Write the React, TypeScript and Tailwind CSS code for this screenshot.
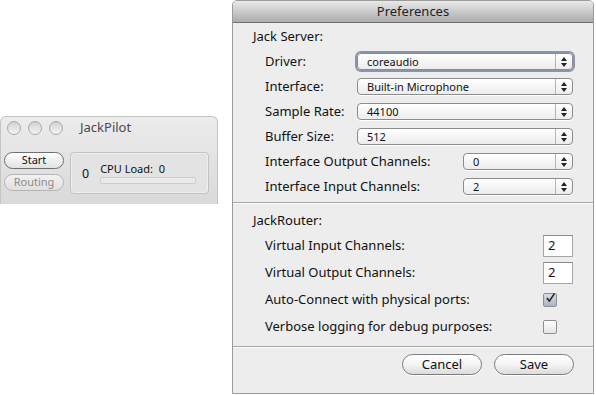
import React from "react";

const font = { fontFamily: '"Noto Sans", "DejaVu Sans", sans-serif' };

function Popup({ value, focused, width }: { value: string; focused?: boolean; width: string }) {
  return (
    <div
      className={`${width} h-[17px] rounded-[4px] border border-[#8c8c8c] bg-gradient-to-b from-[#ffffff] to-[#ececec] flex items-stretch ${
        focused ? "shadow-[0_0_0_2px_#8796aa]" : "shadow-[0_1px_0_#ffffff]"
      }`}
    >
      <div className="flex-1 flex items-center pl-[9px] text-[11px] text-[#111] leading-none">{value}</div>
      <div className="w-[17px] border-l border-[#b5b5b5] flex flex-col items-center justify-center gap-[2px]">
        <svg width="6" height="4" viewBox="0 0 6 4"><path d="M3 0 L6 4 L0 4 Z" fill="#222" /></svg>
        <svg width="6" height="4" viewBox="0 0 6 4"><path d="M0 0 L6 0 L3 4 Z" fill="#222" /></svg>
      </div>
    </div>
  );
}

function Row({ label, children, h = "h-[25px]" }: { label: string; children: React.ReactNode; h?: string }) {
  return (
    <div className={`${h} flex items-center justify-between pl-[32px] pr-[20px]`}>
      <span className="text-[13px] text-[#111]">{label}</span>
      {children}
    </div>
  );
}

function Checkbox({ checked }: { checked?: boolean }) {
  return (
    <div
      className={`w-[14px] h-[14px] rounded-[2px] border border-[#8f8f8f] mr-[16px] flex items-center justify-center ${
        checked ? "bg-gradient-to-b from-[#d8dde6] to-[#aab3c2]" : "bg-gradient-to-b from-[#ffffff] to-[#e4e4e4]"
      }`}
    >
      {checked && (
        <svg width="14" height="14" viewBox="0 0 14 14" className="-mt-[3px] ml-[1px]">
          <path d="M2.5 7 L5.5 11 L12 1.5" stroke="#222" strokeWidth="2" fill="none" strokeLinejoin="round" />
        </svg>
      )}
    </div>
  );
}

function NumField({ v }: { v: string }) {
  return (
    <div className="w-[30px] h-[22px] bg-white border border-[#a6a6a6] border-t-[#8a8a8a] flex items-center pl-[4px] text-[13px] text-[#111]">
      {v}
    </div>
  );
}

function PillButton({ label }: { label: string }) {
  return (
    <div className="w-[80px] h-[21px] rounded-full border border-[#7c7c7c] bg-gradient-to-b from-[#ffffff] via-[#f4f4f4] to-[#dcdcdc] flex items-center justify-center text-[13px] text-[#111] shadow-[0_1px_0_#ffffff]">
      {label}
    </div>
  );
}

function Light() {
  return (
    <div className="w-[14px] h-[14px] rounded-full border border-[#a9a9a9] bg-gradient-to-b from-[#cfcfcf] via-[#e4e4e4] to-[#f3f3f3]" />
  );
}

export default function App() {
  return (
    <div className="w-[596px] h-[395px] bg-white flex items-start overflow-hidden" style={font}>
      {/* JackPilot window */}
      <div className="mt-[116px] w-[218px] h-[88px] rounded-t-[6px] border border-[#c4c4c4] border-b-0 bg-gradient-to-b from-[#ececec] to-[#d9d9d9] flex flex-col">
        <div className="h-[22px] flex items-center pl-[6px]">
          <div className="flex gap-[7px]">
            <Light />
            <Light />
            <Light />
          </div>
          <span className="ml-[17px] text-[13px] text-[#4a4a4a]">JackPilot</span>
        </div>
        <div className="flex pt-[13px] pl-[3px]">
          <div className="flex flex-col gap-[5px]">
            <div className="w-[60px] h-[17px] rounded-full border border-[#6f6f6f] bg-gradient-to-b from-[#ffffff] to-[#e2e2e2] flex items-center justify-center text-[11px] text-[#111]">
              Start
            </div>
            <div className="w-[60px] h-[17px] rounded-full border border-[#b4b4b4] bg-gradient-to-b from-[#f2f2f2] to-[#e0e0e0] flex items-center justify-center text-[11px] text-[#8c8c8c]">
              Routing
            </div>
          </div>
          <div className="ml-[6px] w-[139px] h-[42px] rounded-[4px] border border-[#c2c2c2] bg-[#e3e3e3] shadow-[inset_0_0_0_1px_#efefef] flex items-center">
            <span className="ml-[11px] text-[12.5px] text-[#111] mt-[2px]">0</span>
            <div className="ml-[11px] flex flex-col">
              <span className="text-[11px] text-[#111] leading-none">
                CPU Load:&nbsp;&nbsp;0
              </span>
              <div className="mt-[3px] w-[96px] h-[7px] rounded-[2px] border border-[#cdcdcd] bg-[#e9e9e9]" />
            </div>
          </div>
        </div>
      </div>

      {/* Preferences window */}
      <div className="ml-[14px] w-[362px] h-[394px] rounded-t-[5px] border border-[#9b9b9b] bg-[#ededed] flex flex-col overflow-hidden">
        <div className="h-[22px] shrink-0 bg-gradient-to-b from-[#e9e9e9] to-[#acacac] border-b border-[#6f6f6f] flex items-center justify-center text-[13px] text-[#222]">
          Preferences
        </div>
        <div className="pt-[5px]">
          <div className="h-[18px] flex items-center pl-[20px] text-[13px] text-[#111]">Jack Server:</div>
          <div className="pt-[3px]">
            <Row label="Driver:">
              <Popup value="coreaudio" focused width="w-[216px]" />
            </Row>
            <Row label="Interface:">
              <Popup value="Built-in Microphone" width="w-[216px]" />
            </Row>
            <Row label="Sample Rate:">
              <Popup value="44100" width="w-[216px]" />
            </Row>
            <Row label="Buffer Size:">
              <Popup value="512" width="w-[216px]" />
            </Row>
            <Row label="Interface Output Channels:">
              <Popup value="0" width="w-[110px]" />
            </Row>
            <Row label="Interface Input Channels:">
              <Popup value="2" width="w-[110px]" />
            </Row>
          </div>
        </div>
        <div className="mt-[3px] border-t border-[#a8a8a8] shadow-[0_1px_0_#fafafa]" />
        <div className="pt-[9px]">
          <div className="h-[18px] flex items-center pl-[20px] text-[13px] text-[#111]">JackRouter:</div>
          <div className="pt-[2px]">
            <Row label="Virtual Input Channels:" h="h-[27px]">
              <NumField v="2" />
            </Row>
            <Row label="Virtual Output Channels:" h="h-[27px]">
              <NumField v="2" />
            </Row>
            <Row label="Auto-Connect with physical ports:" h="h-[27px]">
              <Checkbox checked />
            </Row>
            <Row label="Verbose logging for debug purposes:" h="h-[27px]">
              <Checkbox />
            </Row>
          </div>
        </div>
        <div className="mt-[6px] border-t border-[#a8a8a8] shadow-[0_1px_0_#fafafa]" />
        <div className="flex justify-end gap-[12px] pr-[19px] pt-[7px]">
          <PillButton label="Cancel" />
          <PillButton label="Save" />
        </div>
      </div>
    </div>
  );
}
